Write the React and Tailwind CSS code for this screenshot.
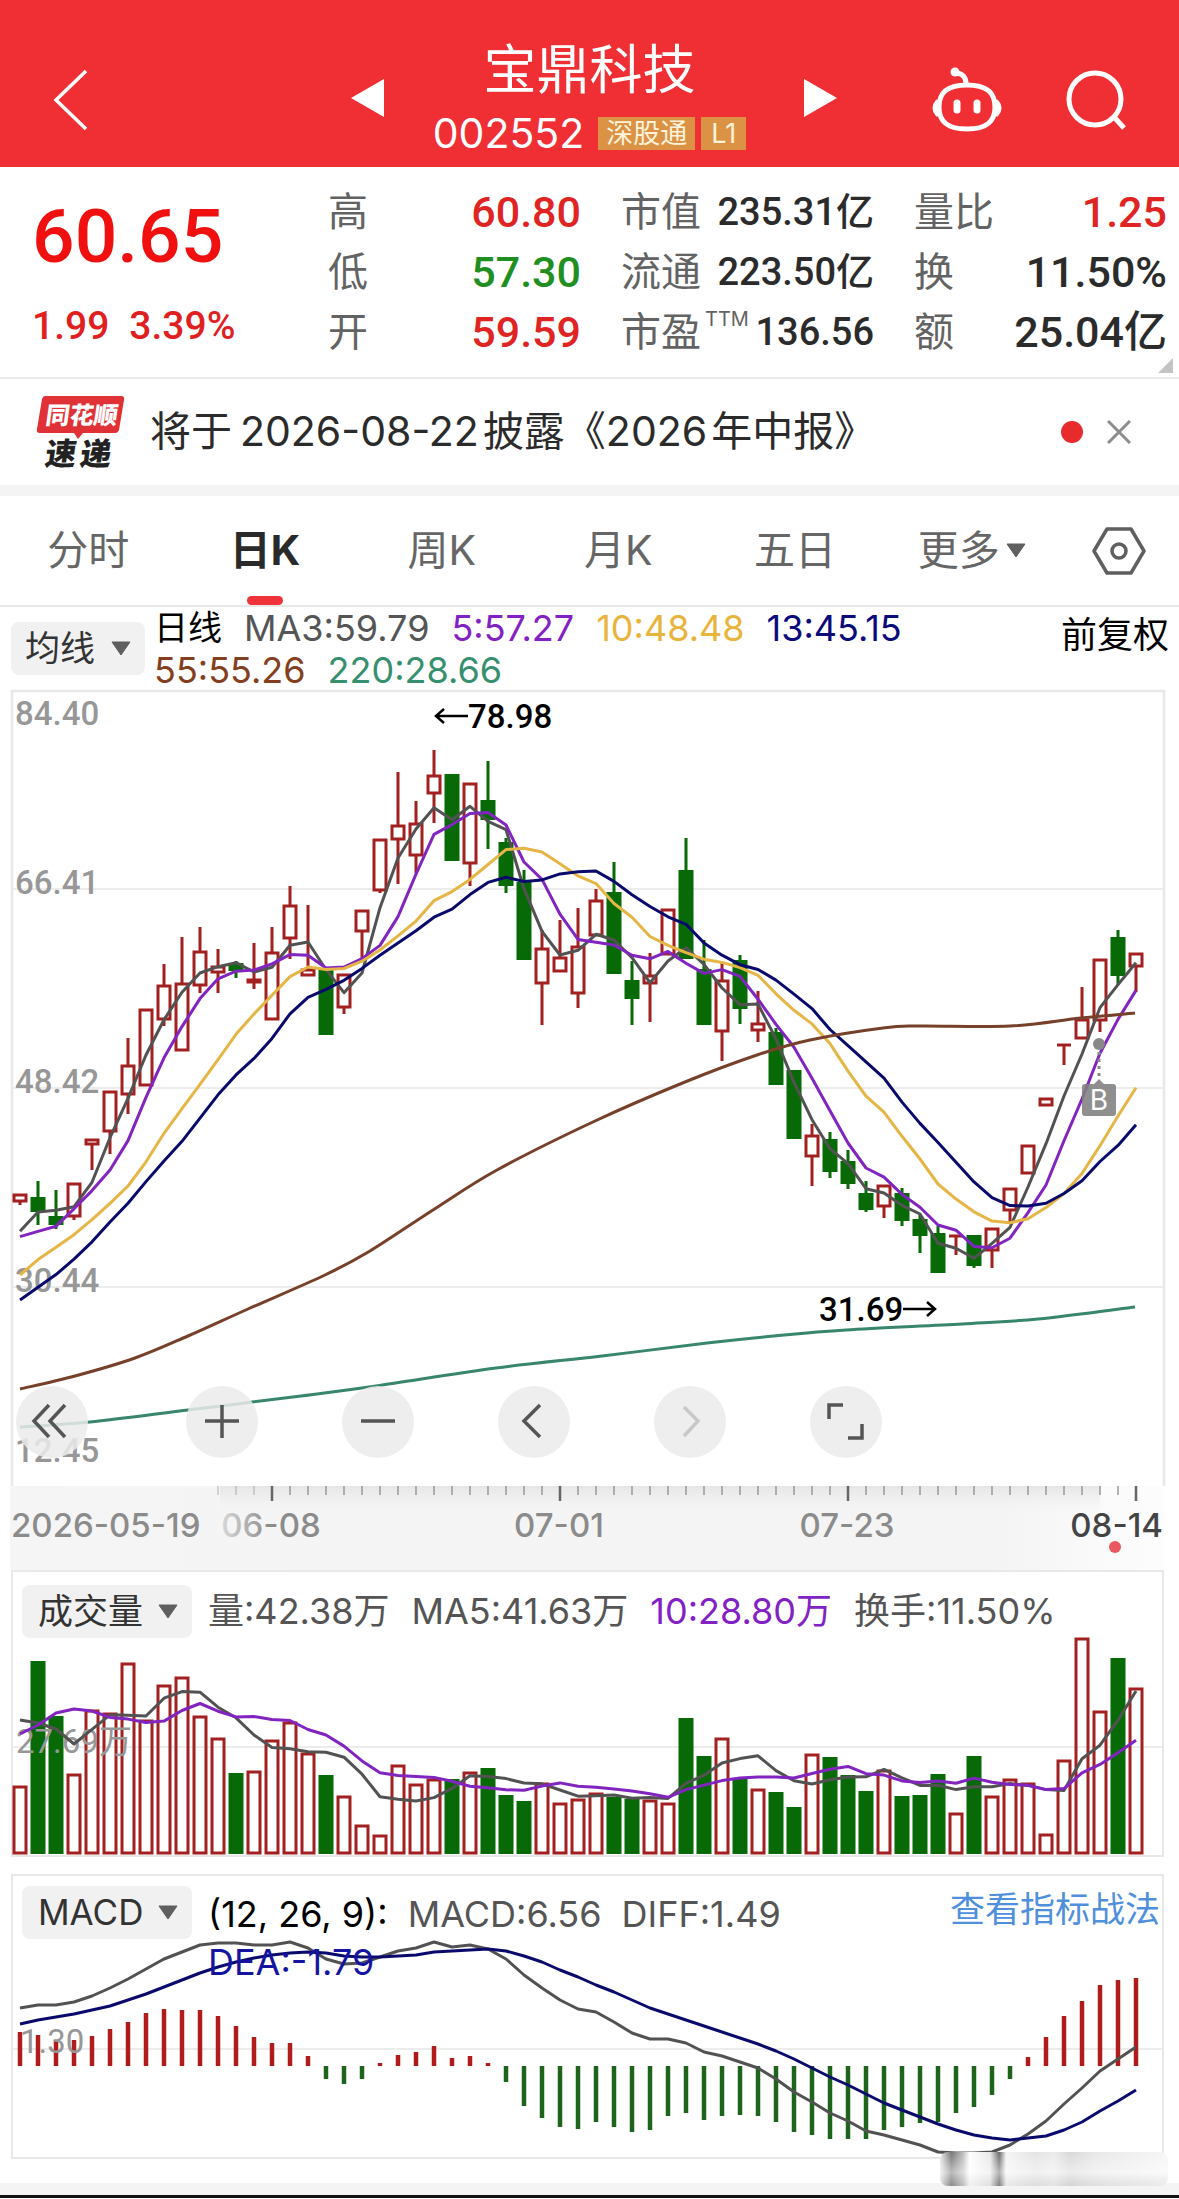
import { useState } from 'react'

const STEP = 18
const X0 = 20
const x = i => X0 + i * STEP

// [up/down, high, body top, body bottom, low, volume, macd]
const DAYS = [
  ['r', 505, 505, 512, 516, 68, 34], ['g', 492, 508, 523, 536, 193, 31], ['g', 501, 527, 536, 540, 138, 26],
  ['r', 494, 494, 527, 531, 80, 26], ['r', 450, 450, 455, 481, 144, 30], ['r', 402, 402, 442, 465, 141, 37],
  ['r', 349, 376, 405, 425, 191, 44], ['r', 320, 320, 396, 396, 134, 53], ['r', 275, 296, 330, 337, 169, 57],
  ['r', 248, 294, 361, 361, 177, 56], ['r', 238, 262, 296, 304, 138, 56], ['r', 260, 277, 283, 304, 116, 50],
  ['g', 272, 274, 282, 289, 81, 40], ['r', 254, 290, 293, 300, 83, 29], ['r', 238, 263, 330, 330, 114, 23],
  ['r', 197, 216, 249, 270, 132, 23], ['r', 216, 280, 286, 286, 101, 10], ['g', 281, 281, 346, 346, 79, -13],
  ['r', 285, 285, 318, 325, 58, -18], ['r', 221, 221, 242, 270, 29, -13], ['r', 150, 150, 201, 204, 19, 3],
  ['r', 83, 136, 150, 195, 89, 11], ['r', 112, 134, 166, 184, 70, 14], ['r', 61, 86, 104, 134, 75, 20],
  ['g', 85, 85, 172, 172, 75, 8], ['r', 94, 94, 174, 197, 82, 10], ['g', 72, 111, 131, 160, 86, 3],
  ['g', 149, 153, 197, 204, 59, -16], ['g', 181, 193, 271, 271, 53, -40], ['r', 241, 259, 294, 336, 71, -52],
  ['r', 231, 268, 282, 282, 51, -61], ['r', 219, 257, 304, 319, 55, -63], ['r', 200, 211, 246, 246, 61, -56],
  ['g', 173, 203, 285, 285, 57, -61], ['g', 272, 291, 310, 336, 55, -66], ['r', 264, 286, 294, 333, 54, -64],
  ['r', 220, 220, 265, 265, 51, -50], ['g', 149, 181, 270, 270, 136, -47], ['g', 251, 280, 336, 336, 98, -54],
  ['r', 273, 291, 342, 372, 116, -50], ['g', 266, 271, 320, 335, 76, -49], ['r', 302, 334, 341, 353, 65, -50],
  ['g', 339, 343, 396, 396, 62, -56], ['g', 381, 381, 450, 450, 47, -66], ['r', 435, 446, 467, 497, 100, -69],
  ['g', 443, 450, 483, 489, 97, -73], ['g', 461, 472, 495, 500, 79, -73], ['g', 492, 504, 521, 523, 63, -73],
  ['r', 496, 496, 517, 529, 84, -64], ['g', 499, 504, 532, 537, 58, -61], ['g', 526, 530, 547, 564, 59, -57],
  ['g', 537, 544, 584, 584, 80, -56], ['r', 547, 547, 547, 566, 41, -47], ['g', 546, 546, 577, 579, 98, -41],
  ['r', 539, 539, 561, 579, 58, -29], ['r', 499, 499, 521, 535, 75, -13], ['r', 456, 456, 484, 484, 71, 9],
  ['r', 409, 409, 416, 416, 20, 29], ['r', 356, 356, 356, 376, 94, 50], ['r', 298, 330, 349, 349, 216, 65],
  ['r', 270, 270, 331, 343, 143, 81], ['g', 241, 248, 287, 296, 196, 86], ['r', 264, 264, 277, 303, 166, 88],
]

// sessions before the first visible day, needed by the averages
const PREV_CLOSE = [690, 699, 694, 677, 659, 620, 601, 565, 549, 562, 581, 541]
const PREV_VOL = [103, 18, 40, 164, 205, 208, 168, 155, 71]

const DIFF = [149, 146, 146, 143, 137, 129, 120, 110, 100, 93, 86, 84, 84, 86, 86, 83, 89, 100, 105, 104, 98, 92, 89, 83, 88, 86, 90, 100, 116, 129, 141, 150, 153, 163, 174, 180, 180, 184, 193, 197, 203, 209, 220, 233, 243, 254, 262, 272, 276, 281, 286, 293, 294, 294, 293, 286, 275, 262, 245, 229, 212, 200, 188]
const DEA = [165, 161, 158, 155, 151, 147, 141, 135, 128, 121, 114, 108, 103, 99, 96, 94, 93, 94, 97, 98, 98, 97, 96, 93, 92, 91, 90, 92, 97, 103, 111, 118, 126, 133, 141, 149, 155, 161, 167, 173, 179, 185, 192, 200, 209, 218, 226, 235, 244, 251, 258, 265, 271, 276, 279, 281, 279, 277, 271, 263, 252, 242, 231]

const MA55 = [[20, 700], [75, 687], [135, 669], [188, 647], [248, 620], [325, 586], [370, 562], [433, 521], [497, 481], [595, 432], [685, 393], [757, 366], [810, 351], [883, 339], [920, 337], [1010, 337], [1081, 329], [1135, 324]]
const MA220 = [[20, 738], [90, 733], [188, 721], [301, 707], [376, 697], [496, 679], [602, 667], [707, 654], [774, 647], [846, 641], [962, 635], [1038, 630], [1135, 618]]

const closes = DAYS.map(d => (d[0] === 'r' ? d[2] : d[3]))
const volumes = DAYS.map(d => d[5])

function average(values, prev, n) {
  const all = [...prev, ...values]
  return values.map((_, i) => {
    const end = prev.length + i + 1
    return all.slice(end - n, end).reduce((a, b) => a + b, 0) / n
  })
}

const points = ys => ys.map((y, i) => `${x(i)},${y.toFixed(1)}`).join(' ')

function Line({ pts, color }) {
  return <polyline points={pts} fill="none" stroke={color} strokeWidth="3" strokeLinejoin="round" />
}

// long averages are sampled sparsely, so join them with a Catmull-Rom curve
function Curve({ pts, color }) {
  let d = `M${pts[0].join(' ')}`
  for (let i = 0; i < pts.length - 1; i++) {
    const p0 = pts[i - 1] || pts[i]
    const p1 = pts[i]
    const p2 = pts[i + 1]
    const p3 = pts[i + 2] || p2
    d += `C${p1[0] + (p2[0] - p0[0]) / 6} ${p1[1] + (p2[1] - p0[1]) / 6} ${p2[0] - (p3[0] - p1[0]) / 6} ${p2[1] - (p3[1] - p1[1]) / 6} ${p2[0]} ${p2[1]}`
  }
  return <path d={d} fill="none" stroke={color} strokeWidth="3" />
}

const RED = '#a32020'
const GREEN = '#076a07'

function Caret({ className }) {
  return (
    <svg className={className} width="20" height="15" viewBox="0 0 20 15">
      <path d="M1 1h18l-9 13z" fill="#5f5f5f" stroke="#5f5f5f" strokeLinejoin="round" />
    </svg>
  )
}

function Header() {
  return (
    <header className="flex items-end justify-between bg-[#f02f35] text-white px-[52px] pt-[35px] pb-1.5">
      <button aria-label="返回" className="mb-[30px]">
        <svg width="36" height="62" viewBox="0 0 36 62" fill="none" stroke="white" strokeWidth="3.5">
          <path d="M34 2L4 31l30 29" />
        </svg>
      </button>
      <div className="flex items-center gap-[50px] ml-[168px]">
        <button aria-label="上一只">
          <svg width="33" height="38" viewBox="0 0 33 38"><path d="M33 0v38L0 19z" fill="white" /></svg>
        </button>
        <div className="flex flex-col items-center w-[320px] pr-2 whitespace-nowrap">
          <h1 className="text-[53px] leading-[70px]">宝鼎科技</h1>
          <div className="flex items-center gap-1.5">
            <span className="text-[41px] leading-[56px] mr-2">002552</span>
            <span className="bg-[#dc9245] text-[#fff3dc] text-[27px] leading-[33px] px-2">深股通</span>
            <span className="bg-[#dc9245] text-[#fff3dc] text-[27px] leading-[33px] px-2.5">L1</span>
          </div>
        </div>
        <button aria-label="下一只">
          <svg width="33" height="38" viewBox="0 0 33 38"><path d="M0 0v38l33-19z" fill="white" /></svg>
        </button>
      </div>
      <div className="flex items-center gap-[62px] mb-[28px]">
        <button aria-label="智能助手">
          <svg width="72" height="66" viewBox="0 0 72 66" fill="none" stroke="white" strokeWidth="5" strokeLinecap="round">
            <path d="M36 18C17 18 8 25 8 40s9 22 28 22 28-7 28-22-9-22-28-22z" />
            <path d="M6 34q-6 7 0 14zM66 34q6 7 0 14z" fill="white" strokeWidth="3" strokeLinejoin="round" />
            <path d="M35 17c0-7-3-10-9-11" />
            <circle cx="24" cy="5" r="3.5" fill="white" strokeWidth="2" />
            <path d="M26 36v7M46 36v7" strokeWidth="7" />
          </svg>
        </button>
        <button aria-label="搜索">
          <svg width="62" height="62" viewBox="0 0 62 62" fill="none" stroke="white" strokeWidth="5">
            <circle cx="30" cy="30" r="26" />
            <path d="M49 48l10 11" />
          </svg>
        </button>
      </div>
    </header>
  )
}

function Stat({ label, sup, value, className }) {
  return (
    <div className="flex items-center justify-between h-[60px] whitespace-nowrap">
      <dt className="text-[40px] text-[#636363]">
        {label}
        {sup && <sup className="text-[20px] ml-1 -top-5">{sup}</sup>}
      </dt>
      <dd className={`font-['Roboto','Noto_Sans_CJK_SC',sans-serif] font-medium ${className}`}>{value}</dd>
    </div>
  )
}

function Summary() {
  return (
    <section className="relative flex pl-8 pr-3 pt-[15px] pb-[15px] border-b-2 border-[#ebebeb]">
      <div className="w-[296px] shrink-0 font-['Roboto',sans-serif] font-medium text-[#f01010]">
        <div className="text-[75px] leading-[108px]">60.65</div>
        <div className="flex gap-5 text-[39px] leading-[72px] text-[#e0201f]">
          <span>1.99</span>
          <span>3.39%</span>
        </div>
      </div>
      <div className="flex-1 grid grid-cols-3 gap-x-10">
        <dl>
          <Stat label="高" value="60.80" className="text-[43px] text-[#e02424]" />
          <Stat label="低" value="57.30" className="text-[43px] text-[#1f8f22]" />
          <Stat label="开" value="59.59" className="text-[43px] text-[#e02424]" />
        </dl>
        <dl>
          <Stat label="市值" value="235.31亿" className="text-[38px] text-[#2b2b2b]" />
          <Stat label="流通" value="223.50亿" className="text-[38px] text-[#2b2b2b]" />
          <Stat label="市盈" sup="TTM" value="136.56" className="text-[38px] text-[#2b2b2b]" />
        </dl>
        <dl>
          <Stat label="量比" value="1.25" className="text-[43px] text-[#e02424]" />
          <Stat label="换" value="11.50%" className="text-[43px] text-[#2b2b2b]" />
          <Stat label="额" value="25.04亿" className="text-[43px] text-[#2b2b2b]" />
        </dl>
      </div>
      <svg className="absolute right-1.5 bottom-1" width="15" height="15" viewBox="0 0 15 15"><path d="M15 0v15H0z" fill="#c4c4c4" /></svg>
    </section>
  )
}

function News() {
  return (
    <section className="flex items-center h-[106px] pl-9 pr-12">
      <svg width="90" height="76" viewBox="0 0 90 76" className="shrink-0 overflow-visible">
        <path d="M9 2h76q4 0 3 4l-5 30q-1 3-4 3H47l-5 6-4-6H4q-4 0-3-4L6 5q1-3 3-3z" fill="#e03236" />
        <g transform="skewX(-8)" fontWeight="900" fontFamily="'Noto Sans CJK SC', sans-serif">
          <text x="13" y="30" fontSize="24" fill="white">同花顺</text>
          <text x="18" y="71" fontSize="31" fill="#222">速</text>
          <text x="53" y="71" fontSize="31" fill="#222">递</text>
        </g>
      </svg>
      <a href="#news" className="ml-6 flex-1 text-[41px] text-[#2b2b2b] whitespace-nowrap">
        将于<span className="ml-2 mr-1">2026-08-22</span>披露《2026<span className="ml-1">年中报》</span>
      </a>
      <span className="size-[22px] rounded-full bg-[#e82c2e]" />
      <button aria-label="关闭" className="ml-6">
        <svg width="24" height="24" viewBox="0 0 24 24" stroke="#8c8c8c" strokeWidth="3"><path d="M1 1l22 22M23 1L1 23" /></svg>
      </button>
    </section>
  )
}

const TABS = ['分时', '日K', '周K', '月K', '五日', '更多']

function Tabs() {
  const [active, setActive] = useState('日K')
  return (
    <nav className="flex items-center border-t-[11px] border-b-2 border-t-[#f4f4f4] border-b-[#e8e8e8] pr-[33px]">
      <div className="flex flex-1">
        {TABS.map(t => (
          <button
            key={t}
            onClick={() => setActive(t)}
            className={`relative flex-1 flex items-center justify-center gap-1.5 h-[109px] text-[41px] ${t === active ? 'font-bold text-[#2a2a2a]' : 'text-[#666]'}`}
          >
            {t}
            {t === '更多' && <Caret />}
            {t === active && <span className="absolute bottom-0 left-1/2 -translate-x-1/2 w-9 h-[9px] rounded-full bg-[#f0323a]" />}
          </button>
        ))}
      </div>
      <button aria-label="设置" className="ml-8">
        <svg width="54" height="48" viewBox="0 0 54 48" fill="none" stroke="#5f5f5f" strokeWidth="3.5" strokeLinejoin="round">
          <path d="M15 2h24l13 22-13 22H15L2 24z" />
          <circle cx="27" cy="24" r="7" />
        </svg>
      </button>
    </nav>
  )
}

function Picker({ label, options, className }) {
  return (
    <div className="relative inline-flex items-center shrink-0">
      <select aria-label={label} className={`appearance-none h-[53px] leading-[53px] rounded-lg bg-[#f1f1f1] text-[#333] ${className}`}>
        {options.map(o => <option key={o}>{o}</option>)}
      </select>
      <Caret className="absolute right-3.5 pointer-events-none" />
    </div>
  )
}

function MaLegend() {
  return (
    <section className="flex items-start pl-[11px] pr-2.5 h-[82px]">
      <div className="pt-[15px]">
        <Picker label="主图指标" options={['均线', 'BOLL', 'SAR']} className="w-[134px] pl-3.5 text-[35px]" />
      </div>
      <div className="flex-1 ml-[9px] flex flex-wrap content-start gap-x-[22px] text-[36px] leading-[42px] whitespace-nowrap">
        <span className="text-[34px] text-black">日线</span>
        <span className="text-[#555]">MA3:59.79</span>
        <span className="text-[#8222c4]">5:57.27</span>
        <span className="text-[#e9b43c]">10:48.48</span>
        <span className="text-[#0b0b7c]">13:45.15</span>
        <span className="basis-full" />
        <span className="text-[#84401e]">55:55.26</span>
        <span className="text-[#36906f]">220:28.66</span>
      </div>
      <button className="text-[36px] leading-[56px] text-black">前复权</button>
    </section>
  )
}

function Candle({ day, i }) {
  const [kind, high, top, bottom, low] = day
  if (kind === 'g') {
    return (
      <g fill={GREEN}>
        <rect x={x(i) - 1.5} y={high} width="3" height={low - high} />
        <rect x={x(i) - 7.5} y={top} width="15" height={bottom - top} />
      </g>
    )
  }
  return (
    <g fill="none" stroke={RED} strokeWidth="3">
      {high < top && <path d={`M${x(i)} ${high}V${top}`} />}
      {low > bottom && <path d={`M${x(i)} ${bottom}V${low}`} />}
      {bottom > top
        ? <rect x={x(i) - 6} y={top + 1} width="12" height={bottom - top - 1} />
        : <path d={`M${x(i) - 7} ${top}h14`} />}
    </g>
  )
}

const PRICE_LABELS = [['84.40', 36], ['66.41', 205], ['48.42', 404], ['30.44', 603], ['12.45', 773]]

function KLine() {
  return (
    <svg viewBox="0 0 1179 881" className="block w-full h-auto">
      <defs>
        <linearGradient id="axis" x1="0" x2="1">
          <stop offset="0" stopColor="#f5f5f5" />
          <stop offset="0.85" stopColor="#f4f4f4" />
          <stop offset="1" stopColor="#fdfdfd" />
        </linearGradient>
        <linearGradient id="axisTop" x1="0" x2="0" y1="0" y2="1">
          <stop offset="0" stopColor="#e6e6e6" />
          <stop offset="1" stopColor="#f5f5f5" stopOpacity="0" />
        </linearGradient>
        <linearGradient id="label" x1="0" x2="1">
          <stop offset="0" stopColor="#d8d8d8" />
          <stop offset="0.5" stopColor="#8b8b8b" />
        </linearGradient>
      </defs>

      <path d="M12 797V2h1152v795" fill="none" stroke="#e8e8e8" strokeWidth="2.5" />
      <path d="M13 200h1150M13 399h1150M13 598h1150" stroke="#ececec" strokeWidth="2" />

      <g fontFamily="Roboto, sans-serif" fontSize="33" fontWeight="500" fill="#979797">
        {PRICE_LABELS.map(([t, y]) => <text key={t} x="15" y={y}>{t}</text>)}
      </g>

      {DAYS.map((d, i) => <Candle key={i} day={d} i={i} />)}
      <Line pts={points(average(closes, PREV_CLOSE, 3))} color="#525252" />
      <Line pts={points(average(closes, PREV_CLOSE, 5))} color="#8224c0" />
      <Line pts={points(average(closes, PREV_CLOSE, 10))} color="#e5b545" />
      <Line pts={points(average(closes, PREV_CLOSE, 13))} color="#0a0a6c" />
      <Curve pts={MA55} color="#77402a" />
      <Curve pts={MA220} color="#38866c" />

      <g fontFamily="Roboto, sans-serif" fontSize="33" fontWeight="500" fill="black">
        <text x="468" y="39">78.98</text>
        <text x="819" y="632">31.69</text>
      </g>
      <path d="M468 27h-32m8-7l-8 7 8 7M903 620h32m-8-7l8 7-8 7" fill="none" stroke="black" strokeWidth="2.5" />

      <circle cx="1099" cy="355" r="6" fill="#888" />
      <path d="M1099 363v27" stroke="#888" strokeWidth="3" strokeDasharray="3 4" />
      <path d="M1085 395h9l5-5 5 5h9q3 0 3 3v26q0 3-3 3h-28q-3 0-3-3v-26q0-3 3-3z" fill="#808080" fillOpacity="0.88" />
      <text x="1099" y="421" textAnchor="middle" fontFamily="Inter, sans-serif" fontSize="28" fill="white">B</text>

      <rect x="10" y="797" width="1154" height="84" fill="url(#axis)" />
      <rect x="220" y="797" width="880" height="30" fill="url(#axisTop)" />
      {DAYS.map((_, i) => {
        if (i < 11) return null
        const major = (i - 14) % 16 === 0
        return (
          <path
            key={i}
            d={`M${x(i)} 797v${major ? 15 : 9}`}
            stroke={major ? '#666' : '#999'}
            strokeWidth={major ? 2.5 : 1.5}
            opacity={i < 14 ? 0.5 : 1}
          />
        )
      })}
      <g fontFamily="Inter, sans-serif" fontSize="33" fontWeight="500" fill="#8b8b8b">
        <text x="11" y="848">2026-05-19</text>
        <text x="271" y="848" textAnchor="middle" fill="url(#label)">06-08</text>
        <text x="559" y="848" textAnchor="middle">07-01</text>
        <text x="847" y="848" textAnchor="middle">07-23</text>
        <text x="1163" y="848" textAnchor="end" fill="#444">08-14</text>
      </g>
      <circle cx="1115" cy="858" r="6" fill="#e9595f" />
    </svg>
  )
}

const TOOLS = [
  ['最早', 'M33 19L18 35l15 16M49 19L34 35l15 16', '#555'],
  ['放大', 'M36 19v33M19 35h34', '#555'],
  ['缩小', 'M19 35h34', '#555'],
  ['左移', 'M42 19L26 35l16 16', '#555'],
  ['右移', 'M30 21l14 14-14 15', '#c8c8c8'],
  ['全屏', 'M19 33V19h14M52 38v14H38', '#555'],
]

function Toolbar() {
  return (
    <div className="absolute left-4 bottom-[112px] flex gap-[84px]">
      {TOOLS.map(([name, d, color]) => (
        <button key={name} aria-label={name} className="size-[72px] rounded-full bg-[#ebebeb]/85 first:mr-[14px]">
          <svg width="72" height="72" viewBox="0 0 72 72" fill="none" stroke={color} strokeWidth="3.5"><path d={d} /></svg>
        </button>
      ))}
    </div>
  )
}

function Volume() {
  const base = 216
  const line = n => points(average(volumes, PREV_VOL, n).map(v => base - v))
  return (
    <section className="ml-[11px] mr-[15px] border-2 border-[#e8e8e8]">
      <div className="flex items-center h-[66px] pl-[9px] pt-3">
        <Picker label="副图指标一" options={['成交量', '成交额']} className="w-[170px] pl-4 text-[35px]" />
        <div className="flex gap-[22px] ml-4 text-[36px] text-[#555] whitespace-nowrap">
          <span>量:42.38万</span>
          <span>MA5:41.63万</span>
          <span className="text-[#8222c4]">10:28.80万</span>
          <span>换手:11.50%</span>
        </div>
      </div>
      <svg viewBox="13 0 1149 217" className="block w-full h-auto overflow-visible">
        <path d="M13 109h1149" stroke="#ececec" strokeWidth="2" />
        {DAYS.map((d, i) => d[0] === 'g'
          ? <rect key={i} x={x(i) - 7.5} y={base - d[5]} width="15" height={d[5]} fill={GREEN} />
          : <rect key={i} x={x(i) - 6} y={base - d[5] + 1} width="12" height={d[5] - 2} fill="none" stroke={RED} strokeWidth="3" />)}
        <text x="16" y="115" fontFamily="Roboto, 'Noto Sans CJK SC', sans-serif" fontSize="33" fill="#979797">27.69万</text>
        <Line pts={line(5)} color="#525252" />
        <Line pts={line(10)} color="#8224c0" />
      </svg>
    </section>
  )
}

function Macd() {
  const base = 190
  return (
    <section className="grid ml-[11px] mr-[15px] mt-[17px] border-2 border-[#e8e8e8]">
      <svg viewBox="13 0 1149 281" className="block w-full h-auto [grid-area:1/1]">
        <path d="M13 173h1149" stroke="#ececec" strokeWidth="2" />
        {DAYS.map((d, i) => (
          <path key={i} d={`M${x(i)} ${base}V${base - d[6]}`} stroke={d[6] > 0 ? '#b01c1c' : '#1f641c'} strokeWidth="4.5" />
        ))}
        <text x="20" y="177" fontFamily="Roboto, sans-serif" fontSize="33" fill="#979797">1.30</text>
        <Line pts={points(DIFF.map(y => y - 17))} color="#525252" />
        <Line pts={points(DEA.map(y => y - 17))} color="#0a0a6c" />
      </svg>
      <div className="[grid-area:1/1] flex items-start pl-[9px] pt-[10px]">
        <Picker label="副图指标二" options={['MACD', 'KDJ', 'RSI']} className="w-[170px] pl-4 text-[35px]" />
        <div className="flex-1 flex flex-wrap content-start gap-x-[20px] ml-4 pt-1 text-[36px] leading-[48px] text-[#555] whitespace-nowrap">
          <span className="text-black">(12, 26, 9):</span>
          <span>MACD:6.56</span>
          <span>DIFF:1.49</span>
          <span className="basis-full text-[#1414a0]">DEA:-1.79</span>
        </div>
        <a href="#macd" className="text-[35px] leading-[46px] text-[#4f8fdc] pr-0.5">查看指标战法</a>
      </div>
    </section>
  )
}

function Watermark() {
  return (
    <svg className="absolute right-2 -top-8" width="234" height="36" viewBox="0 0 234 36">
      <defs>
        <linearGradient id="smudge" x1="0" x2="1">
          <stop offset="0" stopColor="#e4e4e4" />
          <stop offset="0.05" stopColor="#555" />
          <stop offset="0.1" stopColor="#aaa" />
          <stop offset="0.13" stopColor="#fff" />
          <stop offset="0.22" stopColor="#e2e2e2" />
          <stop offset="0.26" stopColor="#444" />
          <stop offset="0.29" stopColor="#f2f2f2" />
          <stop offset="0.42" stopColor="#ddd" />
          <stop offset="0.5" stopColor="#e6e6e6" />
          <stop offset="0.57" stopColor="#cfcfcf" />
          <stop offset="0.68" stopColor="#e2e2e2" />
          <stop offset="1" stopColor="#f4f4f4" />
        </linearGradient>
        <linearGradient id="smudgeFade" x1="0" x2="0" y1="0" y2="1">
          <stop offset="0" stopColor="#fff" stopOpacity="0.2" />
          <stop offset="0.6" stopColor="#fff" stopOpacity="0.6" />
          <stop offset="1" stopColor="#ddd" stopOpacity="0.4" />
        </linearGradient>
      </defs>
      <rect x="3" y="1" width="228" height="34" rx="8" fill="url(#smudge)" />
      <rect x="3" y="1" width="228" height="34" rx="8" fill="url(#smudgeFade)" />
    </svg>
  )
}

export default function App() {
  return (
    <div className="bg-white font-['Inter','Noto_Sans_CJK_SC',sans-serif]">
      <Header />
      <Summary />
      <News />
      <Tabs />
      <MaLegend />
      <main>
        <div className="relative">
          <KLine />
          <Toolbar />
        </div>
        <Volume />
        <Macd />
      </main>
      <footer className="relative mt-6 h-[15px] bg-[#f4f4f4] border-b-[3px] border-[#111]">
        <Watermark />
      </footer>
    </div>
  )
}
